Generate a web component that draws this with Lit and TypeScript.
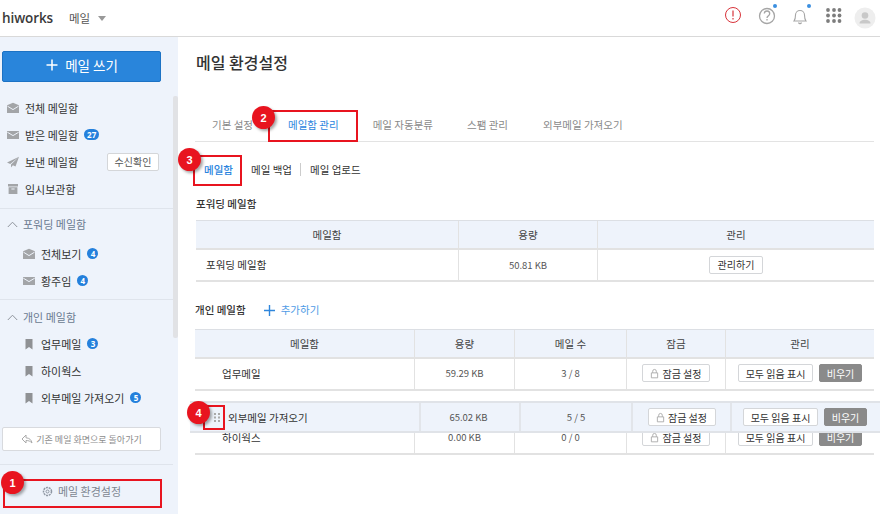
import { LitElement, html, css, svg } from "lit";
import { customElement } from "lit/decorators.js";

const mailOpen = html`<svg class="ico" viewBox="0 0 12 12"><path fill="#a3a5a8" d="M0 3.2 6 .8l6 2.4V11H0z"/><path fill="none" stroke="#eef3fb" d="M.5 4.2 6 7.6l5.5-3.4"/></svg>`;
const mail = html`<svg class="ico" viewBox="0 0 12 12"><path fill="#a3a5a8" d="M0 2h12v8H0z"/><path fill="none" stroke="#eef3fb" d="M.3 3.2 6 6.6l5.7-3.4"/></svg>`;
const send = html`<svg class="ico" viewBox="0 0 12 12"><path fill="#a3a5a8" d="M12 .8 0 6.6l3.2 1.5zM12 .8 4 8.600v3l1.900-2.300 2.600 1.200z"/></svg>`;
const box = html`<svg class="ico" viewBox="0 0 12 12"><path fill="#a3a5a8" d="M1 1h10v2.400H1zM1.600 4.200h8.800V11H1.600zM4.400 5.600v1h3.200v-1z" fill-rule="evenodd"/></svg>`;
const mark = html`<svg class="ico" viewBox="0 0 12 12"><path fill="#8f9194" d="M2.500 1h7v10.500L6 9l-3.500 2.500z"/></svg>`;
const chev = html`<svg class="chev" viewBox="0 0 11 7"><path fill="none" stroke="#8e939b" d="M.8 6 5.500 1.200 10.200 6"/></svg>`;
const lock = html`<svg class="lock" viewBox="0 0 10 11"><path fill="none" stroke="#a9a9a9" d="M1.500 4.800h7v5.500h-7zM3 4.800V3a2 2 0 0 1 4 0v1.800"/></svg>`;

@customElement("app-root")
export class AppRoot extends LitElement {
  static styles = css`
    :host { display: block; width: 880px; height: 514px; position: relative; overflow: hidden; background: #fff;
      font-family: "Noto Sans CJK KR", "Liberation Sans", sans-serif; font-size: 10.5px; color: #333; }
    * { box-sizing: border-box; }
    .top { height: 37px; border-bottom: 1px solid #d9d9d9; display: flex; align-items: center; padding-left: 2px; }
    .logo { font: 600 13.500px "Open Sans", sans-serif; color: #3a3a3a; letter-spacing: -.1px; width: 67px; }
    .app { font-size: 11.500px; color: #555; display: flex; align-items: center; gap: 8px; }
    .caret { width: 0; height: 0; border: 4px solid transparent; border-top: 5px solid #999; border-bottom: 0; }
    .tools { margin-left: auto; display: flex; align-items: center; }
    .tools svg { display: block; }
    .avatar { margin: 0 4px 0 0; }
    .body { display: flex; height: 477px; }
    .side { width: 178px; background: #eef3fb; position: relative; padding-top: 14px; flex: none; }
    .write { margin-left: 2px; width: 159px; height: 31px; background: #2985db; border: 1px solid #1c72c4; border-radius: 2px; color: #fff; font-size: 13.500px;
      display: flex; align-items: center; justify-content: center; gap: 7px; padding: 0 0 3px 1px; }
    .group { border-bottom: 1px solid #dfe4ec; width: 173px; }
    .g1 { height: 127px; padding-top: 12px; }
    .g2 { height: 91px; padding-top: 1px; }
    .g3 { height: 115px; padding-top: 1px; border-bottom: 0; }
    .it { height: 27px; display: flex; align-items: center; padding-left: 7px; color: #333; font-size: 11px; position: relative; }
    .ico { width: 12px; height: 12px; margin-right: 6px; flex: none; }
    .sub .it { padding-left: 23px; }
    .gh { height: 26px; display: flex; align-items: center; padding-left: 7px; color: #6a7a90; font-size: 11px; }
    .g2 .gh { margin: 1px 0 3px; }
    .g3 .gh { margin: 3px 0 0; }
    .chev { width: 11px; height: 7px; margin-right: 5px; }
    .bad { background: #2480dc; color: #fff; font: 700 8px "Open Sans", sans-serif; border-radius: 6px; height: 11px; min-width: 11px; padding: 0 2px; margin-left: 6px;
      display: inline-flex; align-items: center; justify-content: center; }
    .wide { padding: 0 3px; }
    .chk { margin-left: auto; margin-right: 14px; width: 52px; height: 18px; background: #fff; border: 1px solid #d4d6d9; border-radius: 2px; font-size: 10px; color: #555; display: flex; align-items: center; justify-content: center; }
    .backw { height: 50px; width: 173px; border-bottom: 1px solid #dfe4ec; padding: 12px 0 0 2px; }
    .back { width: 159px; height: 24px; background: #fff; border: 1px solid #d8dade; border-radius: 2px; color: #8c8c8c; font-size: 9px;
      display: flex; align-items: center; justify-content: center; gap: 3px; }
    .cfg { height: 52px; display: flex; align-items: center; justify-content: center; gap: 5px; color: #7d8590; font-size: 11px; width: 162px; padding-left: 1px; }
    .scroll { position: absolute; left: 173px; top: 59px; width: 5px; height: 242px; background: #e1e2e5; border-radius: 2px; }
    .main { flex: 1; padding: 0 6px 0 17px; min-width: 0; }
    h1 { margin: 15px 0 0 1px; font-size: 16px; font-weight: 500; color: #333; height: 21px; line-height: 21px; }
    .tabs { margin-top: 36px; height: 33px; border-bottom: 1px solid #e3e3e3; display: flex; align-items: center; padding: 0 0 2px 17px; color: #8a8a8a; font-size: 10.500px; gap: 34px; }
    .tabs .on { color: #2e86de; margin-left: 1px; }
    .tabs .last { margin-left: 1px; }
    .subt { margin-top: 15px; height: 24px; display: flex; align-items: center; font-size: 10.500px; color: #333; padding-left: 9px; }
    .subt .on { color: #2a83dd; width: 47px; font-weight: 500; }
    .subt i { width: 1px; height: 13px; background: #ccc; margin: 0 9px 0 8px; }
    .ttl { margin-top: 13px; height: 20px; font-weight: 500; color: #333; font-size: 10.500px; line-height: 20px; padding-left: 1px; }
    .tt { margin-top: 6px; }
    .row { display: grid; border-bottom: 2px solid #e2e2e2; align-items: stretch; }
    .t1 .row { grid-template-columns: 262px 139px 1fr; margin-left: 1px; }
    .t2 .row { grid-template-columns: 219px 100px 112px 99px 1fr; }
    .row > div { display: flex; align-items: center; justify-content: center; gap: 6px; border-left: 1px solid #e2e2e2; }
    .row > div:first-child { border-left: 0; }
    .hd { background: #eef3fb; border-top: 1px solid #dcdfe4; height: 30px; color: #444; }
    .hd > div { padding-bottom: 1px; }
    .rw { height: 32px; }
    .t1 .rw > div { padding-bottom: 1px; }
    .t2 .rw > div { padding-bottom: 2px; }
    .name { justify-content: flex-start !important; padding-left: 10px; }
    .t2 .name { padding-left: 27px; }
    .btn { height: 18px; background: #fff; border: 1px solid #d4d6d9; border-radius: 2px; font-size: 10px; color: #333; display: inline-flex; align-items: center; justify-content: center; gap: 3px; }
    .lock { width: 9px; height: 11px; }
    .b1 { width: 54px; }
    .b2 { width: 68px; }
    .b3 { width: 75px; }
    .b4 { width: 43px; background: #8a8a8a; color: #fff; border-color: #8a8a8a; }
    .num { font-size: 9.500px; color: #555; }
    .ttl2 { display: flex; align-items: center; margin-top: 18px; height: 20px; margin-left: 0; padding-left: 0; }
    .add { color: #4f9be6; font-weight: 400; display: flex; align-items: center; gap: 6px; margin-left: 18px; }
    .t2 { margin-top: 9px; }
    .ph { height: 32px !important; border-bottom: 0; }
    .drag { position: absolute; left: 190px; top: 401px; width: 690px; height: 32px; background: #eef3fb; border-top: 2px solid #e0e3e8; border-bottom: 2px solid #e0e3e8; display: grid;
      grid-template-columns: 229px 100px 112px 99px 1fr; }
    .drag > div { display: flex; align-items: center; justify-content: center; gap: 6px; border-left: 2px solid #e2e5ea; }
    .drag > div:first-child { border-left: 0; justify-content: flex-start; padding-left: 38px; }
    .drag > div:nth-child(2) { padding-right: 3px; }
    .drag > div:last-child { justify-content: flex-start; padding-left: 11px; }
    .grip { position: absolute; left: 214px; top: 413px; }
    .box { position: absolute; border: 2px solid #e8141f; pointer-events: none; }
    .dot { position: absolute; width: 23px; height: 23px; border-radius: 50%; background: #e8141f; color: #fff; font: 700 11px "Liberation Sans", sans-serif; display: flex; align-items: center; justify-content: center; box-shadow: 2px 2px 3px rgba(0,0,0,.35); }
  `;

  render() {
    return html`
      <div class="top">
        <div class="logo">hiworks</div>
        <div class="app">메일 <span class="caret"></span></div>
        <div class="tools">
          <svg width="144" height="36" viewBox="0 0 144 36">
            ${svg`
            <circle cx="23" cy="15" r="7.500" fill="none" stroke="#d8333a" stroke-width="1"/>
            <path d="M23 10.500v6M23 18v1.500" stroke="#d8333a" stroke-width="1.200"/>
            <circle cx="57" cy="16" r="7.500" fill="none" stroke="#a5a5a5" stroke-width="1.300"/>
            <path d="M54.300 13.500c.3-3.500 5.500-3.200 5.400.2 0 2-2.700 2-2.700 4.300M57 19v1.500" fill="none" stroke="#a5a5a5" stroke-width="1.300"/>
            <circle cx="65" cy="6" r="2" fill="#3b8fe0"/>
            <path d="M84 21c1.500-2 1.500-3 1.500-6 0-2.500 2-4.500 4.500-4.500s4.500 2 4.500 4.500c0 3 0 4 1.500 6zM88.500 22.500c.5 1.500 2.500 1.500 3 0" fill="none" stroke="#a5a5a5" stroke-width="1.100"/>
            <circle cx="99" cy="6" r="2" fill="#3b8fe0"/>
            <g fill="#7d7d7d"><circle cx="118" cy="10" r="1.900"/><circle cx="124" cy="10" r="1.900"/><circle cx="129.500" cy="10" r="1.900"/><circle cx="118" cy="15.500" r="1.900"/><circle cx="124" cy="15.500" r="1.900"/><circle cx="129.500" cy="15.500" r="1.900"/><circle cx="118" cy="21" r="1.900"/><circle cx="124" cy="21" r="1.900"/><circle cx="129.500" cy="21" r="1.900"/></g>
            `}
          </svg>
          <svg class="avatar" width="22" height="22" viewBox="0 0 22 22">
            <circle cx="11" cy="11" r="10.500" fill="#eeeeee"/><circle cx="11" cy="8.500" r="3.300" fill="#c8c8c8"/><path d="M5.500 16.500c0-5 11-5 11 0z" fill="#c8c8c8"/>
          </svg>
        </div>
      </div>
      <div class="body">
        <aside class="side">
          <div class="write"><svg width="12" height="12" viewBox="0 0 12 12"><path d="M6 .5v11M.5 6h11" stroke="#fff" stroke-width="1.500"/></svg>메일 쓰기</div>
          <div class="group g1">
            <div class="it">${mailOpen}전체 메일함</div>
            <div class="it">${mail}받은 메일함<span class="bad wide">27</span></div>
            <div class="it">${send}보낸 메일함<span class="chk">수신확인</span></div>
            <div class="it">${box}임시보관함</div>
          </div>
          <div class="group g2 sub">
            <div class="gh">${chev}포워딩 메일함</div>
            <div class="it">${mailOpen}전체보기<span class="bad">4</span></div>
            <div class="it">${mail}황주임<span class="bad">4</span></div>
          </div>
          <div class="group g3 sub">
            <div class="gh">${chev}개인 메일함</div>
            <div class="it">${mark}업무메일<span class="bad">3</span></div>
            <div class="it">${mark}하이웍스</div>
            <div class="it">${mark}외부메일 가져오기<span class="bad">5</span></div>
          </div>
          <div class="backw"><div class="back"><svg width="12" height="10" viewBox="0 0 12 10"><path d="M5 1 1 5l4 4V6.500c2.500 0 4 .5 6 2.500-.5-3-2.500-5-6-5.200z" fill="none" stroke="#aaa"/></svg>기존 메일 화면으로 돌아가기</div></div>
          <div class="cfg"><svg width="11" height="11" viewBox="0 0 11 11"><circle cx="5.500" cy="5.500" r="4" fill="none" stroke="#8e97a3" stroke-width="1.500" stroke-dasharray="2 .8"/><circle cx="5.500" cy="5.500" r="1.500" fill="none" stroke="#8e97a3"/></svg>메일 환경설정</div>
          <div class="scroll"></div>
        </aside>
        <main class="main">
          <h1>메일 환경설정</h1>
          <div class="tabs"><span>기본 설정</span><span class="on">메일함 관리</span><span>메일 자동분류</span><span>스팸 관리</span><span class="last">외부메일 가져오기</span></div>
          <div class="subt"><span class="on">메일함</span><span>메일 백업</span><i></i><span>메일 업로드</span></div>
          <div class="ttl">포워딩 메일함</div>
          <div class="tt t1">
            <div class="row hd"><div>메일함</div><div>용량</div><div>관리</div></div>
            <div class="row rw"><div class="name">포워딩 메일함</div><div class="num">50.81 KB</div><div><span class="btn b1">관리하기</span></div></div>
          </div>
          <div class="ttl ttl2">개인 메일함<span class="add"><svg width="11" height="11" viewBox="0 0 11 11"><path d="M5.500 0v11M0 5.500h11" stroke="#2f86dc" stroke-width="1.400"/></svg>추가하기</span></div>
          <div class="tt t2">
            <div class="row hd"><div>메일함</div><div>용량</div><div>메일 수</div><div>잠금</div><div>관리</div></div>
            <div class="row rw"><div class="name">업무메일</div><div class="num">59.29 KB</div><div class="num">3 / 8</div><div><span class="btn b2">${lock}잠금 설정</span></div><div><span class="btn b3">모두 읽음 표시</span><span class="btn b4">비우기</span></div></div>
            <div class="row rw ph"></div>
            <div class="row rw"><div class="name">하이웍스</div><div class="num">0.00 KB</div><div class="num">0 / 0</div><div><span class="btn b2">${lock}잠금 설정</span></div><div><span class="btn b3">모두 읽음 표시</span><span class="btn b4">비우기</span></div></div>
          </div>
        </main>
      </div>
      <div class="drag"><div>외부메일 가져오기</div><div class="num">65.02 KB</div><div class="num">5 / 5</div><div><span class="btn b2">${lock}잠금 설정</span></div><div><span class="btn b3">모두 읽음 표시</span><span class="btn b4">비우기</span></div></div>
      <svg class="grip" width="6" height="9" viewBox="0 0 6 9"><g fill="#aaa"><path d="M0 0h2v2H0zM4 0h2v2H4zM0 3.500h2v2H0zM4 3.500h2v2H4zM0 7h2v2H0zM4 7h2v2H4z"/></g></svg>
      <div class="box" style="left:3px;top:479px;width:159px;height:29px"></div>
      <div class="box" style="left:268px;top:110px;width:90px;height:32px"></div>
      <div class="box" style="left:193px;top:155px;width:49px;height:31px"></div>
      <div class="box" style="left:203px;top:405px;width:22px;height:25px"></div>
      <div class="dot" style="left:1px;top:471px">1</div>
      <div class="dot" style="left:252px;top:106px">2</div>
      <div class="dot" style="left:178px;top:148px">3</div>
      <div class="dot" style="left:187px;top:401px">4</div>
    `;
  }
}
